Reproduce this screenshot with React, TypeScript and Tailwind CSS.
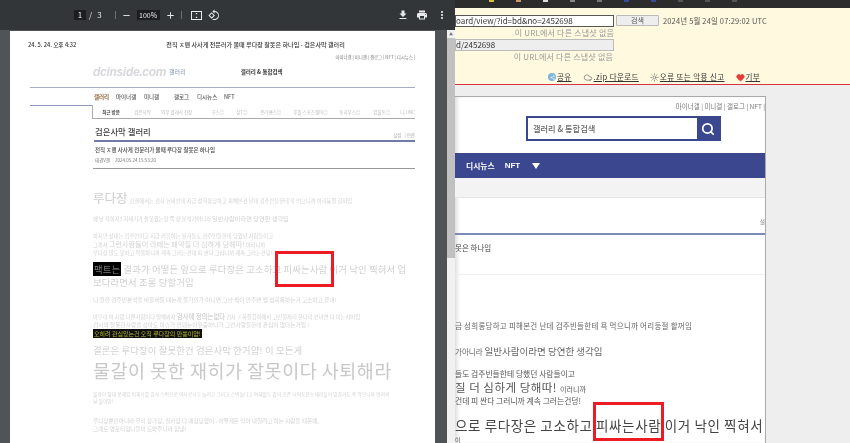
import { MdAdd, MdFileDownload, MdMoreVert, MdPrint, MdRemove, MdRotate90DegreesCcw } from "react-icons/md";
import { Search, Share2, Cloud, Sun, Heart } from "lucide-react";

const font = { fontFamily: '"Noto Sans CJK KR", "Liberation Sans", sans-serif' };

function Toolbar() {
  return (
    <div className="h-[30px] shrink-0 bg-[#323639] flex items-center text-[#e8eaed] text-[8px] pl-[74px] pr-[7px]">
      <span className="w-3 h-[10px] bg-[#1b1d1f] flex items-center justify-center">1</span>
      <span className="ml-[3px]">/</span>
      <span className="ml-[5px]">3</span>
      <span className="ml-[13px] w-px h-2 bg-[#6b6f72]" />
      <MdRemove className="ml-[5px] w-[11px] h-[11px]" />
      <span className="ml-[5px] w-[23px] h-[10px] bg-[#1b1d1f] flex items-center justify-center text-[7px]">100%</span>
      <MdAdd className="ml-[5px] w-[11px] h-[11px]" />
      <span className="ml-[5px] w-px h-2 bg-[#6b6f72]" />
      <svg className="ml-[9px] w-[11px] h-[9px]" viewBox="0 0 11 9" fill="none" stroke="#e8eaed">
        <rect x="0.5" y="0.5" width="10" height="8" />
        <path d="M5.5 2v1.2M5.5 5.8V7" strokeWidth="1.4" />
      </svg>
      <MdRotate90DegreesCcw className="ml-[6px] w-[12px] h-[12px]" />
      <span className="flex-1" />
      <MdFileDownload className="w-[12px] h-[12px]" />
      <MdPrint className="ml-[7px] w-[12px] h-[12px]" />
      <MdMoreVert className="ml-[8px] w-[12px] h-[12px]" />
    </div>
  );
}

function PdfPage() {
  return (
    <div className="w-[425px] h-[420px] ml-[10px] mt-px bg-white overflow-hidden pt-[10px] pr-[20px] text-[#555] text-[5px] leading-[8px] shrink-0">
      <div className="flex pl-[18px] text-[5.7px] font-medium text-[#333] leading-[8px] whitespace-nowrap">
        <span>24. 5. 24. 오후 4:32</span>
        <span className="ml-[90px] text-[6.1px]">전직 ㅈ맨 사사게 전문러가 볼때 루다장 잘못은 하나임 - 검은사막 갤러리</span>
      </div>
      <div className="text-right text-[4.4px] leading-[6px] mt-[5px] text-[#777] whitespace-nowrap">마이너갤 | 미니갤 | 갤로그 | NFT | 디시뉴스 |</div>
      <div className="flex items-center pl-[83px] mt-[6px] h-[12px] whitespace-nowrap">
        <span className="text-[12px] italic font-bold text-[#d8d8dc] tracking-tight" style={{ fontFamily: '"Liberation Sans", sans-serif' }}>dcinside.com</span>
        <span className="ml-[3px] text-[6px] text-[#8a93b5]">갤러리</span>
        <span className="ml-[55px] text-[5.5px] font-bold text-[#333]">갤러리 &amp; 통합검색</span>
      </div>
      <div className="ml-[20px] mt-[9px] h-px bg-[#a4adc8]" />
      <div className="flex pl-[84px] mt-[5px] text-[5.5px] font-medium leading-[8px] text-[#555] whitespace-nowrap">
        <span className="text-[#8a5a2b] font-bold w-[22px]">갤러리</span>
        <span className="w-[28px]">마이너갤</span>
        <span className="w-[30px]">미니갤</span>
        <span className="w-[23px]">갤로그</span>
        <span className="w-[27px]">디시뉴스</span>
        <span>NFT</span>
      </div>
      <div className="flex mt-[4px]">
        <div className="ml-[20px] w-[64px] border-t border-[#8e99ba]" />
        <div className="flex-1 h-[14px] border-l border-b border-[#aaa] border-t-0 flex items-center pl-[9px] text-[4.5px] text-[#bbb] whitespace-nowrap">
          <span className="w-[32px] shrink-0 font-bold text-[#444]">최근 방문</span>
          <span className="w-[27px] shrink-0">검은사막</span>
          <span className="w-[50px] shrink-0">와우 클래식 전장</span>
          <span className="w-[25px] shrink-0">구스㊁</span>
          <span className="w-[24px] shrink-0">상T㊁</span>
          <span className="w-[33px] shrink-0">온라펜스㊁</span>
          <span className="w-[46px] shrink-0">푸폴 스포츠웨어㊁</span>
          <span className="w-[34px] shrink-0">동괴무스㊁</span>
          <span className="w-[27px] shrink-0">임불동㊁</span>
          <span>나.UNC</span>
        </div>
      </div>
      <div className="flex items-end justify-between pl-[85px] mt-[4px] h-[16px]">
        <span className="text-[8.4px] leading-[16px] font-medium text-[#444] whitespace-nowrap">검은사막 갤러리</span>
        <span className="text-[4.5px] text-[#aaa] whitespace-nowrap">설정 &nbsp;&nbsp;| 연관</span>
      </div>
      <div className="ml-[84px] mt-[1px] h-[2px] bg-[#6f7ca3]" />
      <div className="pl-[85px] mt-[4px] text-[5.5px] text-[#444] font-medium whitespace-nowrap">전직 ㅈ맨 사사게 전문러가 볼때 루다장 잘못은 하나임</div>
      <div className="pl-[85px] mt-[2px] text-[4.5px] text-[#777] whitespace-nowrap">태권V갤 &nbsp;&nbsp;&nbsp;&nbsp;2024.05.24 15:53:20</div>
      <div className="ml-[83px] mt-[4px] h-px bg-[#999]" />
      <div className="pl-[83px] text-[#d2d2d2] text-[5.3px] whitespace-nowrap">
        <div className="mt-[20px] flex items-baseline leading-[18px]">
          <span className="text-[12.5px] text-[#ccc]">루다장</span>
          <span className="ml-[2px]">검찰에서는 검사 뉴비인데 지금 성희롱당하고 피해본건 난데 검주빈들한테 욕 먹으니까 어리둥절 할꺼임</span>
        </div>
        <div className="mt-[4px] flex items-baseline leading-[10px]">왜 날 욕하지? 자세기가 잘못했는형 쪽 쟝 분적가아니라 <span className="ml-[1px] text-[6.2px]">일반사람이라면 당연한 생각임</span></div>
        <div className="mt-[8px]">하지만 상대는 검주빈이고 지금 커뮤하는 유저들도 검주빈들한테 당했던 사람들이고</div>
        <div className="flex items-baseline">그래서 <span className="mx-[1px] text-[7.2px]">그런사람들이 라떼는 패악질 더 심하게 당해따!</span> 이러니까</div>
        <div>루다장 말도 못하고 억울하니까 계속 그러는건데 피 싼다 그러니까 계속 그러는건덩!</div>
        <div className="mt-[6px] text-[9.4px] leading-[13px] tracking-[0.13px] text-[#d0d0d0]"><span className="bg-black text-[#777] px-px">팩트는</span> 결과가 어떻든 앞으로 루다장은 고소하고 피싸는사람 이거 낙인 찍혀서 업</div>
        <div className="text-[9.4px] leading-[13px] tracking-[0.13px] text-[#d0d0d0]">보다라면서 조롱 당할거임</div>
        <div className="mt-[7px] text-[5.7px]">니 원한 검주빈분석을 바둘바둘 대는게 물가인가 아니면 그냥 쩍이 안주면 뭘 성희롱하는거 고소하고 끝내!</div>
        <div className="mt-[9px] flex items-baseline">아무리 이 사람 나쁜사람이다 말해봐자 <span className="mx-[1px] text-[6.4px] text-[#c4c4c4]">검사에 정의는없다</span> 검사 ㅈ목질겁이에서 고인물끼리 한다리 건너면 다 아는사이임</div>
        <div className="text-[5.7px]">검사의 잘못한사람을 잡아도 이슈가 안돼는이유중하나가 그런사람들한테 관심이 없다는거임 !</div>
        <div className="mt-px"><span className="bg-[#111] text-[#b8b82a] text-[6px] px-px">오히려 관심있는건 오직 루다장의 만쏭이얌!</span></div>
        <div className="mt-[5px] text-[9.4px] leading-[14px] tracking-[0.13px] text-[#d0d0d0]">결론은 루다장이 잘못한건 검은사막 한거얌! 이 모든게</div>
        <div className="text-[18.5px] leading-[26px] tracking-[0.5px] text-[#c8c8c8]">물갈이 못한 재히가 잘못이다 사퇴해라</div>
        <div className="mt-[7px] text-[4.8px] leading-[7px]">물갈이 절대 못해임 이재카를 검사 스벅으로 여자로시고 놀려고 그리고 스벅놀다고 여해볼도 같이 오픈 놔력도문능세끼들이 망겸가도 욕 먹으니까 연려까</div>
        <div className="text-[4.8px] leading-[7px]">날 들어땅!</div>
        <div className="mt-[13px] text-[5.6px]">루다장뿐만아니라 우리 장가장, 칠카장 다 매장당했어.. 어떻게든 막아 내릴려고 하는 사람들 때문에,</div>
        <div className="text-[5.6px]">그래도 영포티형나들이 도와주니까 힘냉!</div>
      </div>
    </div>
  );
}

function PdfViewer() {
  return (
    <div className="w-[455px] shrink-0 flex flex-col h-full">
      <Toolbar />
      <div className="flex-1 flex min-h-0 bg-[#505457]">
        <div className="flex-1 min-w-0">
          <PdfPage />
        </div>
        <div className="w-[8px] ml-[1px] bg-[#f1f1f1] flex flex-col items-center">
          <div className="h-[8px] flex items-center text-[4px] text-[#777]">▲</div>
          <div className="w-full h-[220px] bg-[#c1c1c1]" />
        </div>
      </div>
    </div>
  );
}

function Waybar() {
  return (
    <div className="h-[76px] bg-[#fff9e0] text-[8px] leading-[10px] text-[#555] shrink-0 pt-[7px] overflow-hidden">
      <div className="flex items-start">
        <div className="w-[159px] h-[12px] bg-white border border-[#555] flex items-center text-[#333] whitespace-nowrap overflow-hidden">oard/view/?id=bd&amp;no=2452698</div>
        <div className="ml-[2px] w-[43px] h-[11px] bg-[#eee] border border-[#bbb] rounded-[1px] text-center text-[7px] leading-[9px]">검색</div>
        <div className="ml-[4px] text-[7.5px] leading-[12px] whitespace-nowrap tracking-[0.15px]">2024년 5월 24일 07:29:02 UTC</div>
      </div>
      <div className="w-[159px] text-right text-[#999] mt-[1px] whitespace-nowrap tracking-[0.2px]">이 URL에서 다른 스냅샷 없음</div>
      <div className="w-[159px] h-[12px] bg-[#eee] border border-[#bbb] mt-px flex items-center text-[#333]">d/2452698</div>
      <div className="w-[158px] text-right text-[#999] whitespace-nowrap mt-[1px] tracking-[0.2px]">이 URL에서 다른 스냅샷 없음</div>
      <div className="flex items-center mt-[10px] pl-[93px] text-[#333] underline whitespace-nowrap text-[7.5px] tracking-[0.4px]">
        <span className="w-[8px] h-[8px] rounded-full bg-[#7fb3d9] flex items-center justify-center"><Share2 className="w-[5px] h-[5px] text-white" /></span>
        <span className="ml-px">공유</span>
        <Cloud className="ml-[11px] w-[10px] h-[9px] text-[#777]" />
        <span className="ml-px">.zip 다운로드</span>
        <Sun className="ml-[11px] w-[9px] h-[9px] text-[#777]" />
        <span className="ml-px">오류 또는 악용 신고</span>
        <Heart className="ml-[11px] w-[9px] h-[9px] text-[#e53b3b] fill-[#e53b3b]" />
        <span className="ml-px">기부</span>
      </div>
    </div>
  );
}

function ArchivedPage() {
  return (
    <div className="flex-1 min-h-0 bg-[#eee] pt-[11px] pr-[84px] overflow-hidden">
      <div className="h-full bg-white border-t border-r border-[#aaa] overflow-hidden text-[#555] shadow-[inset_4px_0_4px_-2px_rgba(0,0,0,0.15)]">
        <div className="text-right text-[6.5px] leading-[8px] mt-[5px] text-[#777] whitespace-nowrap">마이너갤 | 미니갤 | 갤로그 | NFT |</div>
        <div className="ml-[71px] mt-[6px] w-[195px] h-[25px] border-2 border-[#3b4890] flex bg-white">
          <div className="flex-1 flex items-center pl-[5px] text-[8.2px] font-medium text-[#666]">갤러리 &amp; 통합검색</div>
          <div className="w-[22px] bg-[#3b4890] flex items-center justify-center"><Search className="w-[14px] h-[14px] text-white" strokeWidth={3} /></div>
        </div>
        <div className="mt-[12px] h-[25px] bg-[#3b4890] flex items-center pl-[11px] text-white text-[7.8px] font-bold whitespace-nowrap">
          <span>디시뉴스</span>
          <span className="ml-[10px] text-[8px]" style={{ fontFamily: '"Liberation Sans", sans-serif' }}>NFT</span>
          <span className="ml-[12px] w-0 h-0 border-x-[4px] border-x-transparent border-t-[6px] border-t-white" />
        </div>
        <div className="h-[20px] bg-[#f3f3f3] border-b border-[#e4e4e4]" />
        <div className="h-[35px] flex items-end justify-end text-[6px] leading-[10px] text-[#888]">
          <span className="mb-[6px]">설</span>
        </div>
        <div className="h-[2px] bg-[#7c8bb5]" />
        <div className="mt-[8px] text-[7.5px] leading-[10px] text-[#444]">못은 하나임</div>
        <div className="mt-[21px] h-px bg-[#eee]" />
        <div className="mt-[46px] text-[7.5px] leading-[10px] tracking-[0.25px] text-[#666] whitespace-nowrap">금 성희롱당하고 피해본건 난데 검주빈들한테 욕 먹으니까 어리둥절 할꺼임</div>
        <div className="mt-[13px] flex items-baseline text-[7.5px] leading-[14px] text-[#666] whitespace-nowrap">가아니라 <span className="ml-[2px] text-[9.5px] leading-[14px]">일반사람이라면 당연한 생각임</span></div>
        <div className="mt-[10px] text-[7.8px] leading-[10px] whitespace-nowrap">들도 검주빈들한테 당했던 사람들이고</div>
        <div className="mt-[1px] flex items-baseline text-[11.5px] tracking-[0.5px] leading-[14px] whitespace-nowrap">질 더 심하게 당해따! <span className="ml-[3px] text-[7px] tracking-normal">이러니까</span></div>
        <div className="text-[7.8px] leading-[10px] whitespace-nowrap">건데 피 싼다 그러니까 계속 그러는건덩!</div>
        <div className="mt-[9px] text-[13.5px] leading-[20px] tracking-[0.6px] text-[#444] whitespace-nowrap">으로 루다장은 고소하고 피싸는사람 이거 낙인 찍혀서</div>
        <div className="text-[6px] leading-[9px]">이</div>
      </div>
    </div>
  );
}

function TopStrip() {
  const dots = ["#d9c23a", "#c99a6a", "#ddd", "#888", "#777", "#3a4a9a", "#3a4a9a", "#555", "#555", "#555"];
  return (
    <div className="h-[8px] bg-[#2c2c2c] shrink-0 flex items-start pl-[34px] gap-[22px]">
      {dots.map((c, i) => (
        <span key={i} className="w-[5px] h-[2px]" style={{ backgroundColor: c }} />
      ))}
    </div>
  );
}

export default function App() {
  return (
    <div className="relative w-[850px] h-[443px] overflow-hidden flex bg-[#eee] blur-[0.45px]" style={font}>
      <PdfViewer />
      <div className="flex-1 min-w-0 flex flex-col h-full">
        <TopStrip />
        <Waybar />
        <div className="h-px bg-[#d9333f] shrink-0" />
        <ArchivedPage />
      </div>
      <div className="absolute left-[275px] top-[251px] w-[59px] h-[36px] border-[3px] border-[#ed1c24]" />
      <div className="absolute left-[593px] top-[402px] w-[71px] h-[39px] border-[3px] border-[#ed1c24]" />
    </div>
  );
}
